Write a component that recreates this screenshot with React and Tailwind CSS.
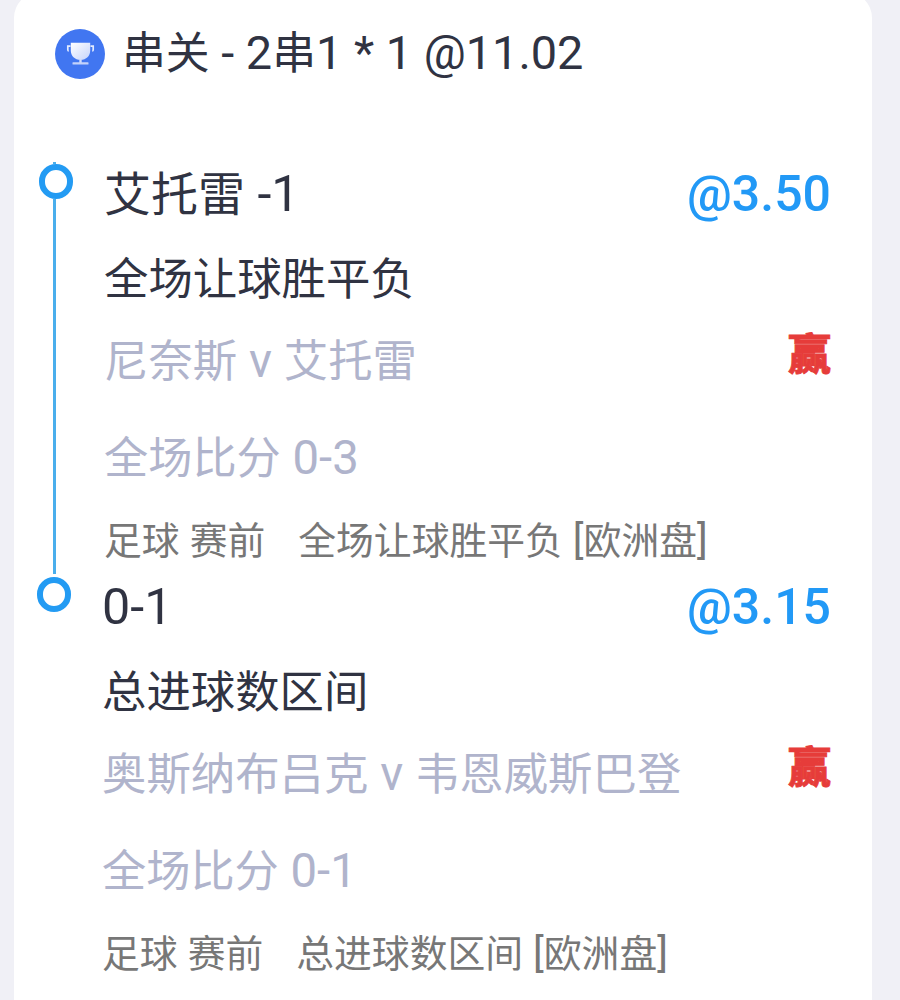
const LEGS = [
  {
    id: 1,
    pick: "艾托雷 -1",
    odds: "@3.50",
    market: "全场让球胜平负",
    match: "尼奈斯 v 艾托雷",
    score: "全场比分 0-3",
    type: "足球 赛前",
    detail: "全场让球胜平负 [欧洲盘]",
    result: "赢",
  },
  {
    id: 2,
    pick: "0-1",
    odds: "@3.15",
    market: "总进球数区间",
    match: "奥斯纳布吕克 v 韦恩威斯巴登",
    score: "全场比分 0-1",
    type: "足球 赛前",
    detail: "总进球数区间 [欧洲盘]",
    result: "赢",
  },
];

// Latin runs are set slightly larger than the Chinese text around them
function Mixed({ children }) {
  return children.split(/([\x20-\x7e]+)/).map((part, i) =>
    i % 2 ? (
      <span key={i} className="text-[1.07em]">
        {part}
      </span>
    ) : (
      part
    )
  );
}

function TrophyBadge() {
  return (
    <svg viewBox="0 0 50 50" className="h-[50px] w-[50px] shrink-0">
      <defs>
        <linearGradient id="cup" x1="0" y1="0" x2="1" y2="1">
          <stop offset="0" stopColor="#ffffff" />
          <stop offset="1" stopColor="#c6d4fb" />
        </linearGradient>
      </defs>
      <circle cx="25" cy="25" r="25" fill="#4176f1" />
      <path
        d="M15.5 17.2h-2.7v3.6q0 1 1 1M35.5 17.2h2.7v3.6q0 1-1 1"
        fill="none"
        stroke="#e3ebfe"
        strokeWidth="1.7"
      />
      <path
        d="M15.8 13.7h19.4v7.8c0 5.6-4 9.3-9.7 9.3s-9.7-3.7-9.7-9.3z"
        fill="url(#cup)"
      />
      <path d="M24.3 30h2.4v4h-2.4z" fill="#d0dcfc" />
      <rect x="17.5" y="33.2" width="16" height="2.4" rx="0.6" fill="#c3d2fa" />
    </svg>
  );
}

function Leg({ leg, first }) {
  return (
    <li className={first ? "flex h-[413px]" : "-ml-0.5 flex h-[413px]"}>
      <div className="flex w-[34px] shrink-0 flex-col items-center">
        <span
          className={first ? "mr-[3px] h-0.5 w-[3px] bg-[#4aaeec]" : "h-0.5"}
        />
        <span className="h-[35px] w-[34px] shrink-0 rounded-full border-[6px] border-[#239bf3]" />
        {first && <span className="mr-[3px] h-[375px] w-[3px] bg-[#4aaeec]" />}
      </div>

      <div
        className={
          first
            ? "ml-[31px] w-[727px] shrink-0 whitespace-nowrap"
            : "ml-[31px] w-[729px] shrink-0 whitespace-nowrap"
        }
      >
        <div className="flex justify-between pt-px leading-[62px]">
          <span className="text-[47px]">
            <Mixed>{leg.pick}</Mixed>
          </span>
          <span className="text-[50px] font-medium text-[#2299f6]">
            {leg.odds}
          </span>
        </div>
        <p className="text-[44.4px] leading-[108px]">{leg.market}</p>
        <div className="-mt-0.5 flex justify-between text-[44.4px] leading-[58px]">
          <p className="text-[#b0b4cc]">
            <Mixed>{leg.match}</Mixed>
          </p>
          <span className="-mt-1.5 text-[43px] font-black text-[#e63c3a] [-webkit-text-stroke:0.8px_#e63c3a]">
            {leg.result}
          </span>
        </div>
        <p className="mt-[37px] text-[44.2px] leading-[60px] text-[#b0b4cc]">
          <Mixed>{leg.score}</Mixed>
        </p>
        <p className="mt-[26px] flex gap-[33px] text-[37.8px] leading-[50px] text-[#777]">
          <span>
            <Mixed>{leg.type}</Mixed>
          </span>
          <span>
            <Mixed>{leg.detail}</Mixed>
          </span>
        </p>
      </div>
    </li>
  );
}

export default function App() {
  return (
    <div className="h-[1000px] overflow-hidden bg-[#f0f0f6] pr-7 pl-3.5 font-[Roboto,'Noto_Sans_CJK_SC',sans-serif] text-[#303342]">
      <main className="-mt-2 h-[1020px] rounded-t-[26px] bg-white">
        <header className="flex h-[170px] gap-[17px] pt-[37px] pl-[41px]">
          <TrophyBadge />
          <h1 className="text-[43.8px] leading-[48px] whitespace-nowrap">
            <Mixed>串关 - 2串1 * 1 @11.02</Mixed>
          </h1>
        </header>
        <ul className="pl-[25px]">
          {LEGS.map((leg, i) => (
            <Leg key={leg.id} leg={leg} first={i === 0} />
          ))}
        </ul>
      </main>
    </div>
  );
}
